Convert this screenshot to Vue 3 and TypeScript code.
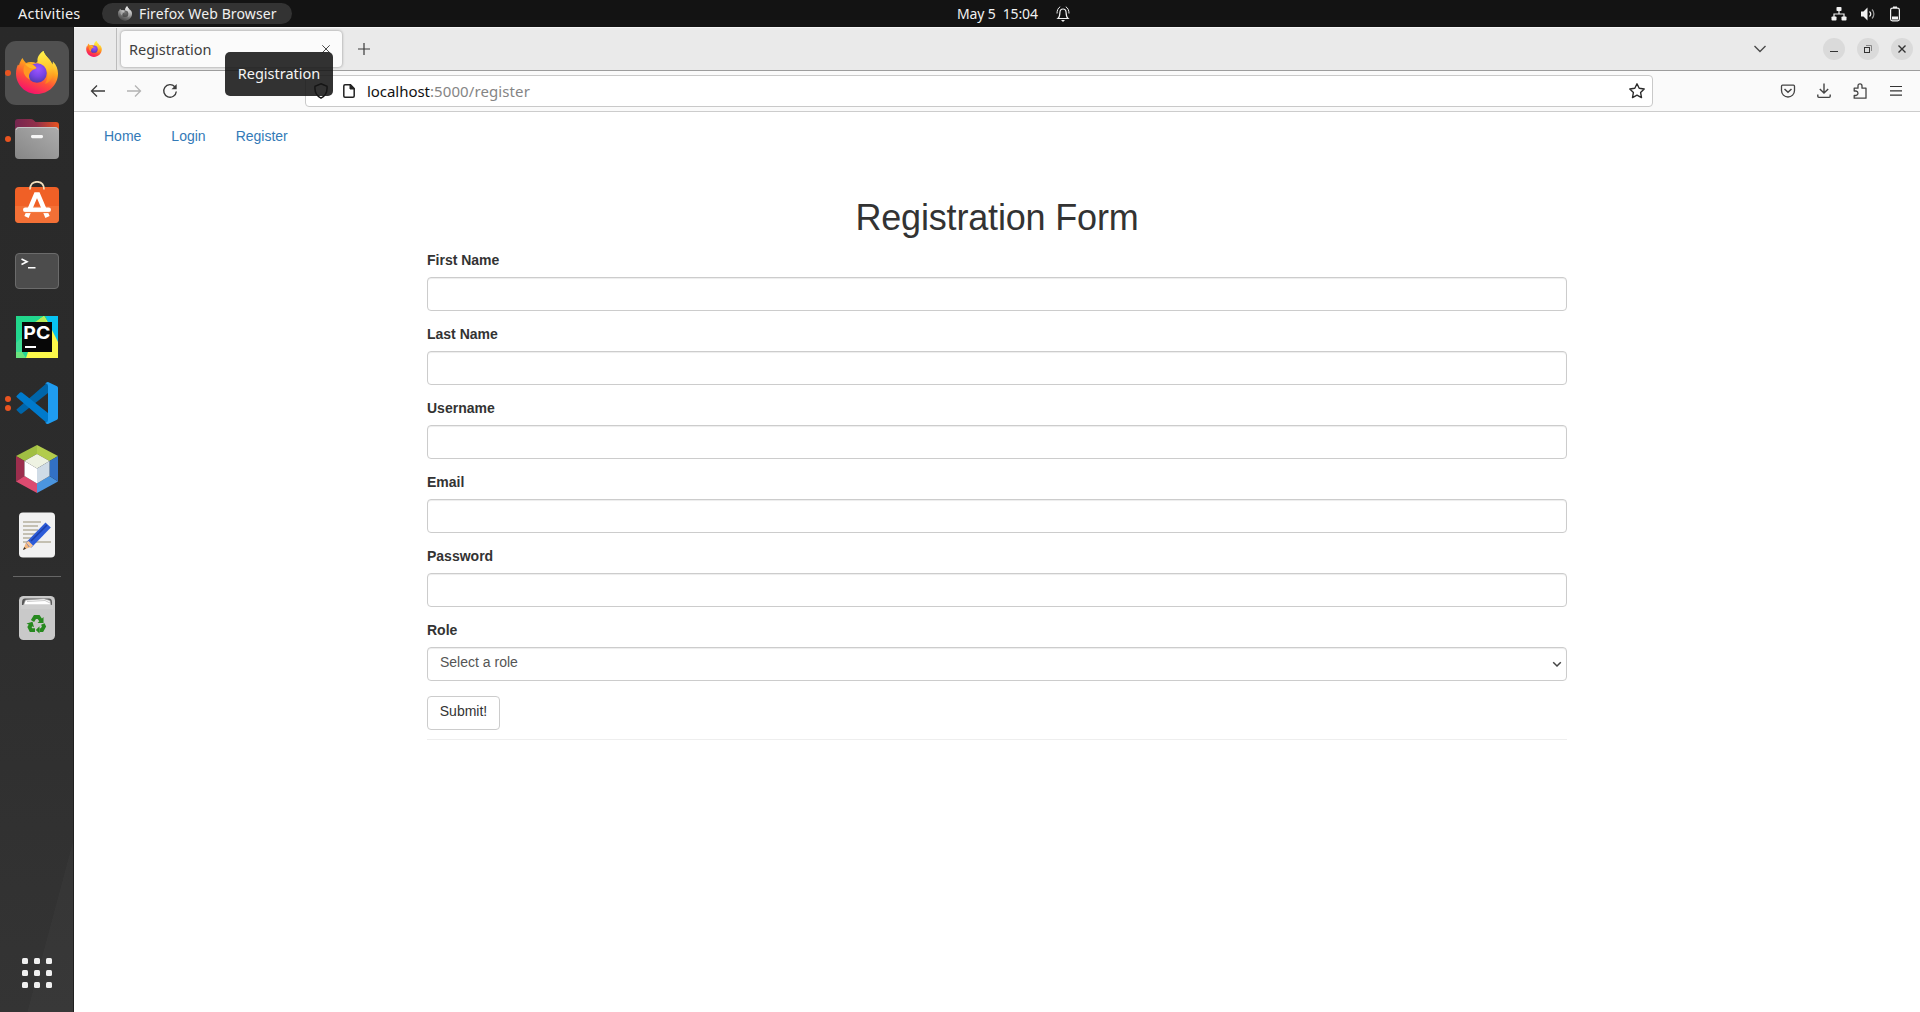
<script setup lang="ts">
import { ref } from 'vue'

interface Field {
  id: string
  label: string
  type: string
}

const links: string[] = ['Home', 'Login', 'Register']
const fields: Field[] = [
  { id: 'first', label: 'First Name', type: 'text' },
  { id: 'last', label: 'Last Name', type: 'text' },
  { id: 'user', label: 'Username', type: 'text' },
  { id: 'email', label: 'Email', type: 'email' },
  { id: 'password', label: 'Password', type: 'password' },
]
const values = ref<Record<string, string>>({})
</script>

<template>
  <div class="desktop">
    <!-- Reusable Firefox mark -->
    <svg class="defs" width="0" height="0">
      <defs>
        <linearGradient id="fx-body" x1="0.75" y1="0.1" x2="0.35" y2="1">
          <stop offset="0" stop-color="#fff44f" />
          <stop offset="0.35" stop-color="#ffa61d" />
          <stop offset="0.65" stop-color="#ff4f3a" />
          <stop offset="1" stop-color="#f5106e" />
        </linearGradient>
        <linearGradient id="fx-flame" x1="0.5" y1="0" x2="0.6" y2="1">
          <stop offset="0" stop-color="#fff04a" />
          <stop offset="0.55" stop-color="#ffc32c" />
          <stop offset="1" stop-color="#ff7b1c" />
        </linearGradient>
        <radialGradient id="fx-globe" cx="0.55" cy="0.3" r="0.75">
          <stop offset="0" stop-color="#9c55ff" />
          <stop offset="0.5" stop-color="#7a45e6" />
          <stop offset="1" stop-color="#4c3aa8" />
        </radialGradient>
        <symbol id="firefox" viewBox="0 0 42 43">
          <path fill="url(#fx-body)" d="M6.5 7C7.500 9 8.500 10.500 10 12C13 10.500 17 10.500 20 12L24 8C23 4 25.500 1.500 27.500 0C28.500 4.500 33 7 35 11L36.500 13.500L37 10.500C40.500 14 42 18.500 42 22.500C42 34 32.500 43 21 43C9.500 43 0 34 0 22.500C0 18 1.200 15.500 2 13.500L3 14.500C3.500 11.500 5 9 6.500 7Z" />
          <path fill="url(#fx-flame)" d="M27.500 0C28.500 4.500 34 7.500 36 13C40 22 36 31 29 33C32 28 33 21 29 17C27 14 22 13 21.500 10C21 6 24 2 27.500 0Z" />
          <circle cx="21" cy="22" r="9.800" fill="url(#fx-globe)" />
          <path fill="#ff9722" d="M8.500 14C13 11.500 18 12.500 20.500 17C19 18.500 16.500 18.500 15 20.500C13 22.500 12 25.500 14.500 29C8 26 6 20 8.500 14Z" />
          <path fill="#ffb52a" d="M9 13C13 12 18 13 20.500 17C18 18.500 13 18 9 13Z" />
        </symbol>
      </defs>
    </svg>

    <header class="topbar">
      <span class="activities">Activities</span>
      <div class="app-pill">
        <svg class="grey-fox" width="14" height="15"><use href="#firefox" /></svg>
        <span class="app-name">Firefox Web Browser</span>
      </div>
      <div class="clock">
        <span class="clock-text">May 5&nbsp; 15:04</span>
        <svg width="14" height="16" viewBox="0 0 14 16" fill="none" stroke="#f0f0f0" stroke-width="1.200">
          <path d="M2 12.500C3.800 11 3.800 9 3.900 6.500C4 4.200 5.200 3 7 3S10 4.200 10.100 6.500C10.200 9 10.200 11 12 12.500Z" />
          <path d="M1 7.500C1 4.500 2 2 4.200 .800M13 7.500C13 4.500 12 2 9.800 .800" stroke-width="1" />
          <path d="M5 14H9L7 16Z" fill="#f0f0f0" stroke="none" />
        </svg>
      </div>
      <div class="status">
        <svg width="16" height="14" viewBox="0 0 16 14" fill="#f2f2f2">
          <rect x="5.500" y="0" width="5" height="4" rx=".8" />
          <rect x=".5" y="9.500" width="5" height="4" rx=".8" />
          <rect x="10.500" y="9.500" width="5" height="4" rx=".8" />
          <path d="M8 4V7M3 10V7H13V10" fill="none" stroke="#f2f2f2" stroke-width="1.200" />
        </svg>
        <svg width="16" height="14" viewBox="0 0 16 14">
          <path d="M1 4.500H3.500L7.500 .500V13.500L3.500 9.500H1Z" fill="#f2f2f2" />
          <path d="M9.500 4.500C11 6 11 8 9.500 9.500" fill="none" stroke="#f2f2f2" stroke-width="1.200" />
          <path d="M12 2.500C14.500 5 14.500 9 12 11.500" fill="none" stroke="#999" stroke-width="1.300" />
        </svg>
        <svg width="12" height="16" viewBox="0 0 12 16">
          <rect x="1.600" y="2.100" width="8.800" height="12.800" rx="1.800" fill="none" stroke="#f2f2f2" stroke-width="1.200" />
          <path d="M4 .500H8V2H4Z" fill="#f2f2f2" />
          <rect x="3" y="10.500" width="6" height="3" fill="#f2f2f2" />
        </svg>
      </div>
    </header>

    <div class="workspace">
      <aside class="dock">
        <div class="dock-item">
          <div class="dots"><i></i></div>
          <div class="tile"><svg width="42" height="43"><use href="#firefox" /></svg></div>
        </div>
        <div class="dock-item">
          <div class="dots"><i></i></div>
          <svg width="48" height="48" viewBox="0 0 48 48">
            <defs>
              <linearGradient id="fold" x1="0" x2="1"><stop offset="0" stop-color="#75264f" /><stop offset=".5" stop-color="#93304a" /><stop offset="1" stop-color="#e9541f" /></linearGradient>
              <linearGradient id="front" x1="0" y1="1" x2="1" y2="0"><stop offset="0" stop-color="#868686" /><stop offset="1" stop-color="#adadad" /></linearGradient>
            </defs>
            <path d="M5 4H18Q20 4 21 5.500L22.500 7H43Q46 7 46 10V30H2V7Q2 4 5 4Z" fill="url(#fold)" />
            <rect x="2" y="12" width="44" height="32" rx="4" fill="url(#front)" />
            <path d="M3 15Q3.500 12.500 6 12.500H42Q44.500 12.500 45 15" fill="none" stroke="#c6c6c6" />
            <rect x="18" y="20" width="12" height="3.200" rx="1.400" fill="#f6f6f6" />
          </svg>
        </div>
        <div class="dock-item">
          <svg width="48" height="48" viewBox="0 0 48 48">
            <rect x="2" y="6" width="44" height="36" rx="4" fill="#f06026" />
            <path d="M2 25H46V38Q46 42 42 42H6Q2 42 2 38Z" fill="#f4793f" opacity=".65" />
            <path d="M17 8.500C17 3 20 .800 24 .800S31 3 31 8.500" fill="none" stroke="#f2dfbd" stroke-width="1.700" />
            <path d="M13.500 36L23 13.500H25L34.500 36" fill="none" stroke="#fff" stroke-width="4.600" />
            <rect x="10" y="26.500" width="28" height="4.500" rx="2.200" fill="#fff" />
            <path d="M12 31.500H36" stroke="#f4793f" stroke-width="1.200" />
          </svg>
        </div>
        <div class="dock-item">
          <svg width="48" height="48" viewBox="0 0 48 48">
            <rect x="2.500" y="6.500" width="43" height="35" rx="3.500" fill="#4c4c4c" stroke="#6b6b6b" />
            <path d="M8.500 12L14 14.800L8.500 17.500M15 20.700H22.500" fill="none" stroke="#fff" stroke-width="1.600" />
          </svg>
        </div>
        <div class="dock-item">
          <svg width="48" height="48" viewBox="0 0 48 48">
            <defs><linearGradient id="pc" x1="0" y1="0" x2="1" y2="1"><stop offset="0" stop-color="#21d789" /><stop offset="1" stop-color="#25d5a0" /></linearGradient></defs>
            <rect x="3" y="3" width="42" height="42" fill="url(#pc)" />
            <path d="M33 3H45V31L38 20Z" fill="#07c3f2" />
            <path d="M24 8L31 3L36 11L45 29V45H13L20 24Z" fill="#fcf84a" />
            <path d="M24 8L31 3L34 9H22Z" fill="#b6ea5a" />
            <path d="M3 30L9 24V39L3 45Z" fill="#3edb93" />
            <path d="M13 45L9 39H3V45Z" fill="#6be37d" />
            <rect x="9" y="9" width="30" height="30" fill="#070707" />
            <text x="10.300" y="26.200" class="pc-text" textLength="27" lengthAdjust="spacingAndGlyphs">PC</text>
            <rect x="12" y="33" width="11" height="2" fill="#fff" />
          </svg>
        </div>
        <div class="dock-item">
          <div class="dots"><i></i><i></i></div>
          <svg width="48" height="48" viewBox="0 0 48 48">
            <path d="M3.500 31L7 34.500Q8 35.200 9 34.500L35 14V3L4 30Q3.300 30.500 3.500 31Z" fill="#0065a9" />
            <path d="M3.500 17L7 13.500Q8 12.800 9 13.500L35 34V45L4 18.500Q3 17.700 3.500 17Z" fill="#007acc" />
            <path d="M35 3L44 7.200Q45 7.700 45 9V39Q45 40.300 44 40.800L35 45Q33.500 45 32 43.500Q35 44 35 40.500V7.500Q35 4 32 4.500Q33.500 3 35 3Z" fill="#1f9cf0" />
          </svg>
        </div>
        <div class="dock-item">
          <svg width="48" height="48" viewBox="0 0 48 48">
            <path d="M24 0L45 11L36.500 16L24 9Z" fill="#b2cc4c" />
            <path d="M24 0L3 11L11.500 16L24 9Z" fill="#a1bf43" />
            <path d="M3 11L11.500 16V31L3 36.500Z" fill="#9c2e4d" />
            <path d="M3 36.500L11.500 31L24 38.500V48Z" fill="#dc4b70" />
            <path d="M24 48V38.500L36.500 31L45 36.500Z" fill="#4b95df" />
            <path d="M45 11V36.500L36.500 31V16Z" fill="#3270c4" />
            <path d="M24 9L36.500 16L24 23.500L11.500 16Z" fill="#eef2e2" />
            <path d="M11.500 16L24 23.500V38.500L11.500 31Z" fill="#fff" />
            <path d="M36.500 16L24 23.500V38.500L36.500 31Z" fill="#cfdbe6" />
          </svg>
        </div>
        <div class="dock-item">
          <svg width="48" height="48" viewBox="0 0 48 48">
            <rect x="6" y="1.500" width="36" height="45" rx="4" fill="#f1f1f1" />
            <path d="M10 11H28M10 15H25M10 19H25M10 23H23M10 27H19M10 31H38" stroke="#c4c0b2" stroke-width="1.800" />
            <path d="M10 39L13 31.500L17.500 36Z" fill="#f2b67c" />
            <path d="M10 39L11.200 36L13 37.700Z" fill="#333" />
            <path d="M13 31.500L32.500 11.500L37.800 16.500L18.500 36.500L15.500 35.500Z" fill="#2c5bd8" />
            <path d="M13 31.500L15.500 30L20 34.500L17.500 37Z" fill="#f8c491" />
            <path d="M18 30L34 14" stroke="#1c3fa8" stroke-width="1.600" />
          </svg>
        </div>
        <div class="dock-rule"></div>
        <div class="dock-item">
          <svg width="48" height="48" viewBox="0 0 48 48">
            <rect x="6" y="2" width="36" height="44" rx="4.500" fill="#c9c9c9" />
            <path d="M9 8.500Q9 4.500 12 4.500H36Q39 4.500 39 8.500V11H9Z" fill="#575757" />
            <path d="M10.500 11L12.500 6L31 4.800L37 6.500L38 11Z" fill="#fff" stroke="#999" stroke-width=".7" />
            <path d="M14 7.500L32 6.500L37 9" fill="none" stroke="#bbb" stroke-width=".8" />
            <path d="M8 11H40V15H8Z" fill="#cecece" />
            <g fill="none" stroke="#27891f" stroke-width="3.800">
              <path d="M19.500 27L22 23H25.500L28 26.500" />
              <path d="M29.800 30L31 32.500L29 36.100H26.500" />
              <path d="M22 36.100H18L16.500 33L18 30.500" />
            </g>
            <path d="M30.500 23V29H24.500ZM26.500 32.300V39.500L22.800 36.100ZM13.500 29.500L19.500 27.800L21 33.300Z" fill="#27891f" />
          </svg>
        </div>
        <div class="apps-grid"><i v-for="n in 9" :key="n"></i></div>
      </aside>

      <main class="browser">
        <div class="tabstrip">
          <div class="pinned"><svg width="16" height="16"><use href="#firefox" /></svg></div>
          <div class="tab">
            <span class="tab-title">Registration</span>
            <svg width="10" height="10" viewBox="0 0 10 10"><path d="M1.300 1.300L8.700 8.700M8.700 1.300L1.300 8.700" stroke="#4a4a4a" stroke-width="1" /></svg>
          </div>
          <svg class="plus" width="12" height="12" viewBox="0 0 12 12"><path d="M6 0V12M0 6H12" stroke="#3a3a3a" stroke-width="1.200" /></svg>
          <svg class="all-tabs" width="14" height="8" viewBox="0 0 14 8"><path d="M1.500 1L7 6.500L12.500 1" fill="none" stroke="#4a4a4a" stroke-width="1.400" /></svg>
          <div class="win-buttons">
            <span><svg width="22" height="22" viewBox="0 0 22 22"><path d="M7 13.500H15" stroke="#333" /></svg></span>
            <span><svg width="22" height="22" viewBox="0 0 22 22" fill="none"><path d="M9 7.500H14.500V13" stroke="#888" /><rect x="7.500" y="9.500" width="5" height="5" stroke="#333" /></svg></span>
            <span><svg width="22" height="22" viewBox="0 0 22 22"><path d="M7.500 7.500L14.500 14.500M14.500 7.500L7.500 14.500" stroke="#333" stroke-width="1.400" /></svg></span>
          </div>
        </div>

        <div class="toolbar">
          <div class="nav-buttons">
            <svg width="16" height="16" viewBox="0 0 16 16" fill="none" stroke="#3c3c3c" stroke-width="1.300"><path d="M15 8H1.500M7 2.500L1.500 8L7 13.500" /></svg>
            <svg width="16" height="16" viewBox="0 0 16 16" fill="none" stroke="#b3b3b3" stroke-width="1.300"><path d="M1 8H14.500M9 2.500L14.500 8L9 13.500" /></svg>
            <svg width="16" height="16" viewBox="0 0 16 16" fill="none" stroke="#3c3c3c" stroke-width="1.400"><path d="M12.800 3.800A6.300 6.300 0 1 0 14.300 8.500" /><path d="M14.700 1V6.200H9.500Z" fill="#3c3c3c" stroke="none" /></svg>
          </div>
          <div class="urlbar">
            <svg width="16" height="16" viewBox="0 0 16 16" fill="none" stroke="#111" stroke-width="1.500"><path d="M8 .800L14 3.300C14.500 8.500 12.500 13 8 15.200C3.500 13 1.500 8.500 2 3.300Z" /></svg>
            <svg class="page-icon" width="14" height="16" viewBox="0 0 14 16" fill="none" stroke="#222" stroke-width="1.500"><path d="M3 1.800H8.500L12.200 5.500V13Q12.200 14.200 11 14.200H3Q1.800 14.200 1.800 13V3Q1.800 1.800 3 1.800Z" /><path d="M8 1.800V6H12.200Z" fill="#222" stroke-width="1" /></svg>
            <span class="url"><b>localhost</b>:5000/register</span>
            <svg class="star" width="18" height="18" viewBox="0 0 18 18" fill="none" stroke="#2b2b2b" stroke-width="1.400" stroke-linejoin="round"><path d="M9 1.800L11.200 6.300L16.200 7L12.600 10.500L13.500 15.600L9 13.200L4.500 15.600L5.400 10.500L1.800 7L6.800 6.300Z" /></svg>
          </div>
          <div class="actions">
            <svg width="16" height="16" viewBox="0 0 16 16" fill="none" stroke="#444" stroke-width="1.300"><path d="M2.500 2.200H13.500Q14.500 2.200 14.500 3.200V7.500A6.500 6.500 0 0 1 1.500 7.500V3.200Q1.500 2.200 2.500 2.200Z" /><path d="M4.500 6L8 9.200L11.500 6" stroke-width="1.500" /></svg>
            <svg width="16" height="16" viewBox="0 0 16 16" fill="none" stroke="#444" stroke-width="1.400"><path d="M8 .500V10M3.800 6L8 10L12.200 6M1.800 11.500V13.300Q1.800 14.400 2.900 14.400H13.100Q14.200 14.400 14.200 13.300V11.500" /></svg>
            <svg width="16" height="16" viewBox="0 0 16 16" fill="none" stroke="#444" stroke-width="1.300"><path d="M2.200 8V5.200H6V3Q6 .900 8 .900T10 3V5.200H14V15.200H2.200V12.500H4Q6 12.300 6 10.300T4 8Z" stroke-linejoin="round" /></svg>
            <svg width="16" height="16" viewBox="0 0 16 16" fill="none" stroke="#333" stroke-width="1.200"><path d="M2 3.500H14M2 7.800H14M2 12.200H14" /></svg>
          </div>
        </div>

        <div class="page">
          <nav class="site-nav"><a v-for="l in links" :key="l">{{ l }}</a></nav>
          <form class="form" @submit.prevent>
            <h1>Registration Form</h1>
            <div v-for="f in fields" :key="f.id" class="group">
              <label :for="f.id">{{ f.label }}</label>
              <input :id="f.id" v-model="values[f.id]" class="control" :type="f.type" />
            </div>
            <div class="group role">
              <label>Role</label>
              <div class="control select">
                <span>Select a role</span>
                <svg width="10" height="7" viewBox="0 0 10 7"><path d="M1.200 1.200L5 5L8.800 1.200" fill="none" stroke="#444" stroke-width="1.500" /></svg>
              </div>
            </div>
            <button class="submit" type="submit">Submit!</button>
            <hr />
          </form>
        </div>
      </main>
    </div>

    <div class="tooltip"><span>Registration</span></div>
  </div>
</template>

<style>
body {
  margin: 0;
  overflow: hidden;
}
</style>

<style scoped>
* {
  box-sizing: border-box;
}
svg {
  display: block;
  flex: none;
}
.desktop {
  position: relative;
  display: flex;
  flex-direction: column;
  width: 1920px;
  height: 1012px;
  overflow: hidden;
  font-family: 'Noto Sans', 'Open Sans', sans-serif;
  font-size: 14px;
}
.defs {
  position: absolute;
}
.topbar {
  display: grid;
  grid-template-columns: 957px 1fr auto;
  grid-template-rows: 27px;
  align-items: center;
  position: relative;
  height: 27px;
  flex: none;
  background: #131313;
  color: #f0f0f0;
  white-space: nowrap;
}
.activities {
  grid-area: 1 / 1;
  padding: 0 0 2px 18px;
  font-size: 14.5px;
  letter-spacing: 0.2px;
}
.app-pill {
  grid-area: 1 / 1;
  display: flex;
  align-items: center;
  width: 190px;
  height: 21px;
  margin-left: 102px;
  padding-left: 16px;
  gap: 7px;
  border-radius: 11px;
  background: #333;
}
.grey-fox {
  filter: grayscale(1);
}
.app-name {
  letter-spacing: 0.12px;
}
.clock {
  grid-area: 1 / 2;
  display: flex;
  align-items: center;
}
.clock-text {
  width: 99px;
  padding-bottom: 1px;
  letter-spacing: -0.13px;
}
.status {
  grid-area: 1 / 3;
  display: flex;
  align-items: center;
  gap: 13px;
  padding-right: 19px;
}
.workspace {
  display: flex;
  flex: 1;
  min-height: 0;
}
.dock {
  display: flex;
  flex-direction: column;
  width: 74px;
  flex: none;
  padding-top: 13px;
  border-right: 1px solid #202020;
  background: linear-gradient(105deg, transparent 0 63%, rgba(255, 255, 255, 0.02) 63.5%) 0 100% / 100% 190px no-repeat,
    linear-gradient(#292929 0, #2c2c2c 50%, #343434 100%);
}
.dock-item {
  display: grid;
  grid-template-columns: 13px 48px;
  align-items: center;
  height: 66px;
  flex: none;
}
.dock-item > svg {
  grid-column: 2;
}
.dots {
  display: flex;
  flex-direction: column;
  align-items: flex-end;
  gap: 3px;
  padding-right: 2px;
}
.dots i {
  width: 6px;
  height: 6px;
  border-radius: 50%;
  background: #e95420;
}
.tile {
  display: grid;
  place-items: center;
  width: 64px;
  height: 64px;
  margin-left: -8px;
  padding-bottom: 2px;
  border-radius: 11px;
  background: #505050;
}
.dock-item:first-child .dots {
  z-index: 1;
}
.pc-text {
  fill: #fff;
  font: 700 18px Inter, sans-serif;
}
.dock-rule {
  height: 1px;
  margin: 8px 12px 8px 13px;
  background: #666;
  flex: none;
}
.apps-grid {
  display: grid;
  grid-template-columns: repeat(3, 6px);
  grid-auto-rows: 6px;
  gap: 6px;
  margin: auto 0 24px 22px;
}
.apps-grid i {
  border-radius: 1.5px;
  background: #f0f0f0;
}
.browser {
  display: flex;
  flex-direction: column;
  flex: 1;
  min-width: 0;
  background: #fff;
}
.tabstrip {
  display: flex;
  align-items: center;
  height: 44px;
  flex: none;
  border-top: 1px solid #f8f8f8;
  border-bottom: 1px solid #9d9d9d;
  background: #eaeaea;
}
.pinned {
  display: flex;
  align-items: center;
  align-self: stretch;
  width: 43px;
  padding-left: 12px;
  border-right: 1px solid #bcbcbc;
}
.tab {
  display: flex;
  align-items: center;
  justify-content: space-between;
  width: 221px;
  height: 36px;
  margin-left: 4px;
  padding: 0 11px 0 8px;
  border-radius: 4px;
  background: #fbfbfb;
  box-shadow: 0 0 3px rgba(0, 0, 0, 0.4);
  color: #3f3f3f;
}
.tab-title {
  font-size: 14.5px;
}
.plus {
  margin-left: 16px;
}
.all-tabs {
  margin-left: auto;
}
.win-buttons {
  display: flex;
  gap: 12px;
  margin: 0 7px 0 56px;
}
.win-buttons span {
  width: 22px;
  height: 22px;
  border-radius: 50%;
  background: #dadada;
}
.toolbar {
  display: flex;
  align-items: center;
  height: 41px;
  flex: none;
  border-bottom: 1px solid #ccc;
  background: #fafafa;
}
.nav-buttons {
  display: flex;
  gap: 20px;
  margin-left: 16px;
}
.urlbar {
  display: flex;
  align-items: center;
  width: 1348px;
  height: 32px;
  margin-left: 127px;
  padding: 0 6px 0 7px;
  border: 1px solid #c9c9c9;
  border-radius: 4px;
  background: #fff;
}
.page-icon {
  margin-left: 13px;
}
.url {
  margin-left: 11px;
  color: #858585;
  font-size: 15px;
  letter-spacing: 0.1px;
}
.url b {
  color: #111;
  font-weight: 400;
  letter-spacing: -0.05px;
}
.star {
  margin-left: auto;
}
.actions {
  display: flex;
  gap: 20px;
  margin-left: 127px;
}
.page {
  flex: 1;
  color: #333;
  font: 14px/20px 'Liberation Sans', Arial, sans-serif;
}
.site-nav {
  display: flex;
  padding: 4px 15px 0;
}
.site-nav a {
  padding: 10px 15px;
  color: #337ab7;
}
.form {
  width: 1140px;
  margin: 42px auto 0;
}
h1 {
  margin: 0 0 12px;
  font-size: 36px;
  font-weight: 400;
  line-height: 40px;
  letter-spacing: -0.17px;
  text-align: center;
}
.group {
  margin-bottom: 13px;
}
.group.role {
  margin-bottom: 15px;
}
label {
  display: block;
  margin-bottom: 7px;
  font-weight: 700;
}
.control {
  display: block;
  width: 100%;
  height: 34px;
  padding: 6px 12px;
  border: 1px solid #ccc;
  border-radius: 4px;
  background: #fff;
  box-shadow: inset 0 1px 1px rgba(0, 0, 0, 0.075);
  color: #555;
  font: inherit;
  outline: none;
}
.select {
  display: flex;
  justify-content: space-between;
  align-items: center;
  padding: 0 4px 0 12px;
}
.select span {
  padding-bottom: 4px;
}
.submit {
  display: block;
  width: 73px;
  height: 34px;
  padding: 0 0 4px;
  border: 1px solid #ccc;
  border-radius: 4px;
  background: #fff;
  color: #333;
  font: inherit;
}
hr {
  height: 1px;
  margin: 9px 0 0;
  border: 0;
  background: #eee;
}
.tooltip {
  position: absolute;
  left: 225px;
  top: 52px;
  display: grid;
  place-items: center;
  width: 108px;
  height: 44px;
  padding-bottom: 2px;
  border-radius: 5px;
  background: rgba(22, 22, 22, 0.88);
  color: #f4f4f4;
  font-size: 14.5px;
}
</style>
